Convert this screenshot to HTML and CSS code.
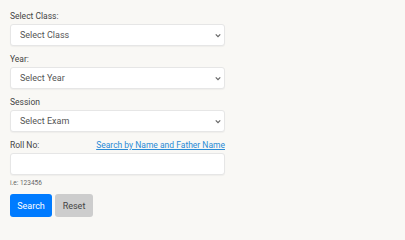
FILE: index.html
```html
<!DOCTYPE html>
<html>
<head>
<meta charset="utf-8">
<link rel="stylesheet" href="styles.css">
</head>
<body>
<form class="form">
  <div class="group">
    <label class="label">Select Class:</label>
    <div class="select-wrap">
      <select class="control"><option>Select Class</option></select>
      <svg class="chev" viewBox="0 0 8 6" width="6" height="5"><path d="M1 1.5 L4 4.5 L7 1.5" fill="none" stroke="#666" stroke-width="1.6"/></svg>
    </div>
  </div>
  <div class="group">
    <label class="label">Year:</label>
    <div class="select-wrap">
      <select class="control"><option>Select Year</option></select>
      <svg class="chev" viewBox="0 0 8 6" width="6" height="5"><path d="M1 1.5 L4 4.5 L7 1.5" fill="none" stroke="#666" stroke-width="1.6"/></svg>
    </div>
  </div>
  <div class="group">
    <label class="label">Session</label>
    <div class="select-wrap">
      <select class="control"><option>Select Exam</option></select>
      <svg class="chev" viewBox="0 0 8 6" width="6" height="5"><path d="M1 1.5 L4 4.5 L7 1.5" fill="none" stroke="#666" stroke-width="1.6"/></svg>
    </div>
  </div>
  <div class="group last">
    <div class="label-row">
      <label class="label">Roll No:</label>
      <a class="link" href="#">Search by Name and Father Name</a>
    </div>
    <input class="control input" type="text">
    <div class="hint">i.e: 123456</div>
  </div>
  <div class="buttons">
    <button type="button" class="btn btn-primary">Search</button>
    <button type="button" class="btn btn-reset">Reset</button>
  </div>
</form>
</body>
</html>
```
FILE: styles.css
```css
html, body {
  margin: 0;
  padding: 0;
  background: #f9f8f5;
}
body {
  font-family: Roboto, "Liberation Sans", sans-serif;
  color: #333;
}
.form {
  width: 215px;
  padding: 10px 0 0 10px;
  display: flex;
  flex-direction: column;
}
.group {
  display: flex;
  flex-direction: column;
  margin-bottom: 7px;
}
.group.last {
  margin-bottom: 6px;
}
.label {
  font-size: 8.5px;
  line-height: 12px;
  color: #444;
  margin-bottom: 2px;
}
.label-row {
  display: flex;
  justify-content: space-between;
  align-items: baseline;
  height: 14px;
}
.link {
  font-size: 8.5px;
  line-height: 12px;
  color: #2a8bd6;
  text-decoration: underline;
}
.select-wrap {
  position: relative;
  display: flex;
}
.chev {
  position: absolute;
  right: 4px;
  top: 9px;
  pointer-events: none;
}
.control {
  box-sizing: border-box;
  width: 215px;
  height: 22px;
  margin: 0;
  border: 1px solid #e6e6e6;
  border-radius: 3px;
  background: #fff;
  font-family: Roboto, "Liberation Sans", sans-serif;
  font-size: 9px;
  color: #555;
  padding: 0 9px;
  box-shadow: 0 1px 1px rgba(0,0,0,0.04);
  appearance: none;
  -webkit-appearance: none;
  outline: none;
}
.hint {
  font-size: 6.5px;
  line-height: 10px;
  color: #666;
  margin-top: 3px;
}
.buttons {
  display: flex;
  gap: 3px;
}
.btn {
  height: 23px;
  border: none;
  border-radius: 3px;
  font-family: Roboto, "Liberation Sans", sans-serif;
  font-size: 9px;
  padding: 0;
}
.btn-primary {
  background: #007bff;
  color: #fff;
  width: 42px;
}
.btn-reset {
  background: #cdcdcd;
  color: #444;
  width: 38px;
}
```
